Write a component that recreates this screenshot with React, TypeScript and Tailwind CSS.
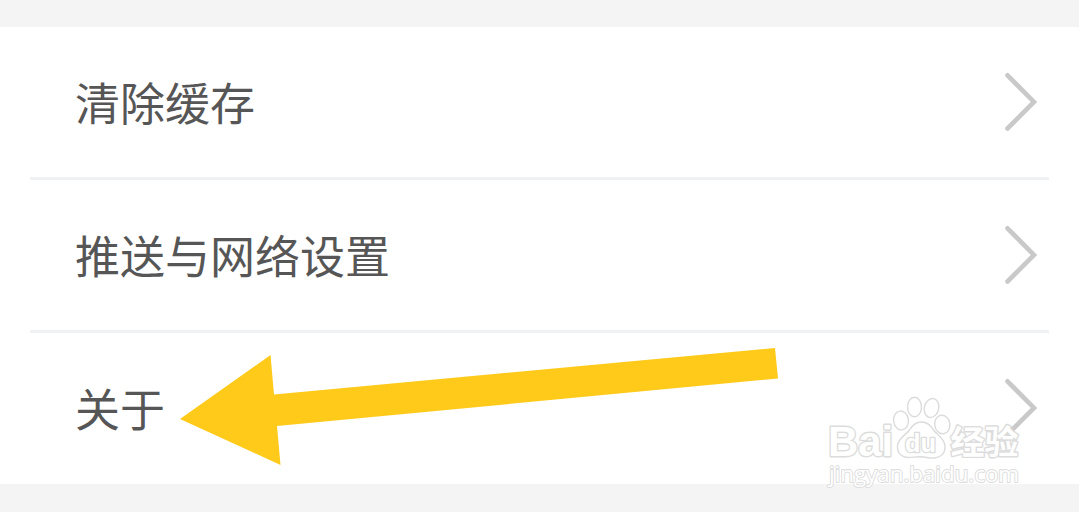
const items = ["清除缓存", "推送与网络设置", "关于"];

function Chevron() {
	return (
		<svg className="w-10 h-16 shrink-0" viewBox="0 0 40 64" fill="none">
			<path d="M8.5 5.3L35 32L8.5 58.5" stroke="#c9c9c9" strokeWidth="4.6" strokeLinecap="round" />
		</svg>
	);
}

function Arrow() {
	return (
		<svg className="absolute left-[176px] top-[340px] w-[610px] h-[130px]" viewBox="176 340 610 130">
			<path d="M180 419L270.5 355L274 394.5L775 348L778 378.5L277 426L280.5 465Z" fill="#ffca1a" />
		</svg>
	);
}

function Watermark() {
	return (
		<svg
			className="absolute left-[819px] top-[390px] w-[212px] h-[105px]"
			viewBox="819 390 212 105"
			fill="#fff"
			stroke="#dcdcdc"
			strokeWidth="1.4"
			strokeLinejoin="round"
		>
			<text
				x="828"
				y="456"
				textLength="65"
				lengthAdjust="spacingAndGlyphs"
				strokeWidth="2.8"
				paintOrder="stroke"
				className="font-['Liberation_Sans',sans-serif] font-bold text-[43px]"
			>
				Bai
			</text>
			<ellipse cx="901" cy="420.5" rx="7.4" ry="9.5" transform="rotate(-8 901 420.5)" />
			<ellipse cx="914.5" cy="407" rx="7" ry="9.7" />
			<ellipse cx="931.5" cy="408" rx="7.2" ry="9.6" transform="rotate(14 931.5 408)" />
			<ellipse cx="942.3" cy="424.5" rx="7.6" ry="9.3" transform="rotate(-8 942.3 424.5)" />
			<path d="M921.5 422C916 422 912.5 425 909.5 430C906.5 434.5 898 438 897.5 446C897 453 902 457.5 908 457.5C913 457.5 916 456.5 921 456.8C926 457 930 458.5 935 458C941 457.3 945.5 453 945 446C944.5 438 936.5 434.5 933.5 430C930.5 425 927 422 921.5 422Z" />
			<text
				x="905"
				y="451.5"
				textLength="31"
				lengthAdjust="spacingAndGlyphs"
				strokeWidth="2.6"
				paintOrder="stroke"
				className="font-['Liberation_Sans',sans-serif] font-bold text-[25px]"
			>
				du
			</text>
			<text
				x="950.5"
				y="454"
				textLength="68"
				lengthAdjust="spacingAndGlyphs"
				strokeWidth="2.8"
				paintOrder="stroke"
				className="font-['Noto_Sans_CJK_SC',sans-serif] font-bold text-[33px]"
			>
				经验
			</text>
			<text
				x="829"
				y="482"
				textLength="190"
				lengthAdjust="spacingAndGlyphs"
				strokeWidth="1.8"
				paintOrder="stroke"
				className="font-['Open_Sans',sans-serif] text-[21px]"
			>
				jingyan.baidu.com
			</text>
		</svg>
	);
}

export default function App() {
	return (
		<div className="relative w-full h-screen overflow-hidden bg-[#f4f4f4] pt-[27px]">
			<ul className="h-[457px] bg-white px-[30px]">
				{items.map((label) => (
					<li
						key={label}
						className="flex h-[153px] items-center justify-between border-b-[3px] border-[#f0f1f3] pl-[45px] pr-2.5 last:border-b-transparent"
					>
						<span className="pb-0.5 font-['Noto_Sans_CJK_SC',sans-serif] text-[45px] leading-none text-[#565656]">
							{label}
						</span>
						<Chevron />
					</li>
				))}
			</ul>
			<Arrow />
			<Watermark />
		</div>
	);
}
